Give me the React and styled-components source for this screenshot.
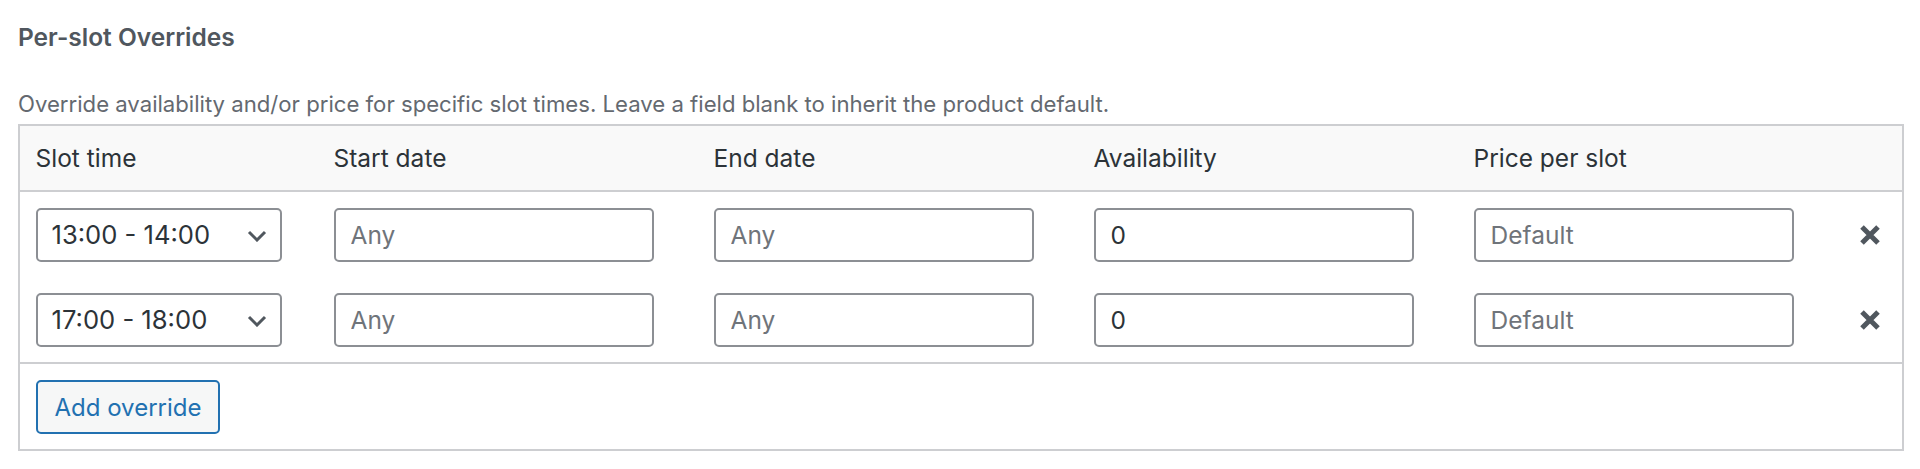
import React from "react";
import styled, { createGlobalStyle } from "styled-components";

const Global = createGlobalStyle`
  html, body { margin: 0; padding: 0; background: #ffffff; }
  body { font-family: Inter, "Noto Sans", "Liberation Sans", sans-serif; }
  * { box-sizing: border-box; }
`;

const Page = styled.div`
  padding: 20px 16px 0 18px;
  width: 1920px;
`;

const Title = styled.h3`
  margin: 0;
  font-size: 24.5px;
  line-height: 34px;
  font-weight: 600;
  color: #50575e;
`;

const Description = styled.p`
  margin: 35px 0 0;
  font-size: 22.15px;
  line-height: 30px;
  color: #646970;
`;

const Table = styled.div`
  margin-top: 5px;
  border: 2px solid #cdced1;
  background: #ffffff;
`;

const Row = styled.div`
  display: grid;
  grid-template-columns: 298px 380px 380px 380px 380px 1fr;
  align-items: center;
  height: ${(p) => p.$h}px;
  background: ${(p) => (p.$head ? "#f9f9f9" : "#ffffff")};
  border-bottom: ${(p) => (p.$line ? "2px solid #cdced1" : "none")};
`;

const HeadCell = styled.div`
  padding-left: 15.5px;
  font-size: 24.5px;
  color: #2c3338;
`;

const Cell = styled.div`
  padding-left: 15.5px;
  display: flex;
  align-items: center;
`;

const RemoveCell = styled.div`
  display: flex;
  align-items: center;
  justify-content: center;
`;

const SelectWrap = styled.div`
  position: relative;
  width: 246px;
  height: 54px;
`;

const Select = styled.select`
  appearance: none;
  -webkit-appearance: none;
  width: 100%;
  height: 100%;
  border: 2px solid #8c8f94;
  border-radius: 5px;
  background: #ffffff;
  padding: 0 0 0 14px;
  font-family: inherit;
  font-size: 25.6px;
  color: #2c3338;
  outline: none;
`;

const Chevron = styled.svg`
  position: absolute;
  right: 15px;
  top: 22px;
  width: 20px;
  height: 12px;
  pointer-events: none;
`;

const Input = styled.input`
  width: 320px;
  height: 54px;
  border: 2px solid #8c8f94;
  border-radius: 5px;
  background: #ffffff;
  padding: 0 15px;
  font-family: inherit;
  font-size: 24.5px;
  color: #2c3338;
  outline: none;
  &::placeholder { color: #6f747a; opacity: 1; }
`;

const RemoveButton = styled.button`
  border: none;
  background: none;
  padding: 0;
  width: 22px;
  height: 22px;
  display: flex;
  cursor: pointer;
`;

const Footer = styled.div`
  height: 85px;
  padding: 16px 15.5px 0;
`;

const AddButton = styled.button`
  height: 54px;
  padding: 0 17px;
  border: 2px solid #2271b1;
  border-radius: 5px;
  background: #f6f7f7;
  color: #2271b1;
  font-family: inherit;
  font-size: 24px;
  cursor: pointer;
`;

const XIcon = () => (
  <svg width="22" height="22" viewBox="0 0 22 22">
    <path d="M3 3 L19 19 M19 3 L3 19" stroke="#50575e" strokeWidth="5" strokeLinecap="butt" fill="none" />
  </svg>
);

const rows = [
  { slot: "13:00 - 14:00", avail: "0" },
  { slot: "17:00 - 18:00", avail: "0" },
];

export default function App() {
  return (
    <>
      <Global />
      <Page>
        <Title>Per-slot Overrides</Title>
        <Description>
          Override availability and/or price for specific slot times. Leave a field blank to inherit the product default.
        </Description>
        <Table>
          <Row $head $line $h={66}>
            <HeadCell>Slot time</HeadCell>
            <HeadCell>Start date</HeadCell>
            <HeadCell>End date</HeadCell>
            <HeadCell>Availability</HeadCell>
            <HeadCell>Price per slot</HeadCell>
            <HeadCell />
          </Row>
          {rows.map((r, i) => (
            <Row key={i} $h={i === rows.length - 1 ? 87 : 85} $line={i === rows.length - 1}>
              <Cell>
                <SelectWrap>
                  <Select defaultValue={r.slot}>
                    <option>13:00 - 14:00</option>
                    <option>17:00 - 18:00</option>
                  </Select>
                  <Chevron viewBox="0 0 20 12">
                    <path d="M2 2 L10 10 L18 2" stroke="#50575e" strokeWidth="3" fill="none" />
                  </Chevron>
                </SelectWrap>
              </Cell>
              <Cell><Input placeholder="Any" /></Cell>
              <Cell><Input placeholder="Any" /></Cell>
              <Cell><Input defaultValue={r.avail} /></Cell>
              <Cell><Input placeholder="Default" /></Cell>
              <RemoveCell>
                <RemoveButton aria-label="Remove"><XIcon /></RemoveButton>
              </RemoveCell>
            </Row>
          ))}
          <Footer>
            <AddButton>Add override</AddButton>
          </Footer>
        </Table>
      </Page>
    </>
  );
}
